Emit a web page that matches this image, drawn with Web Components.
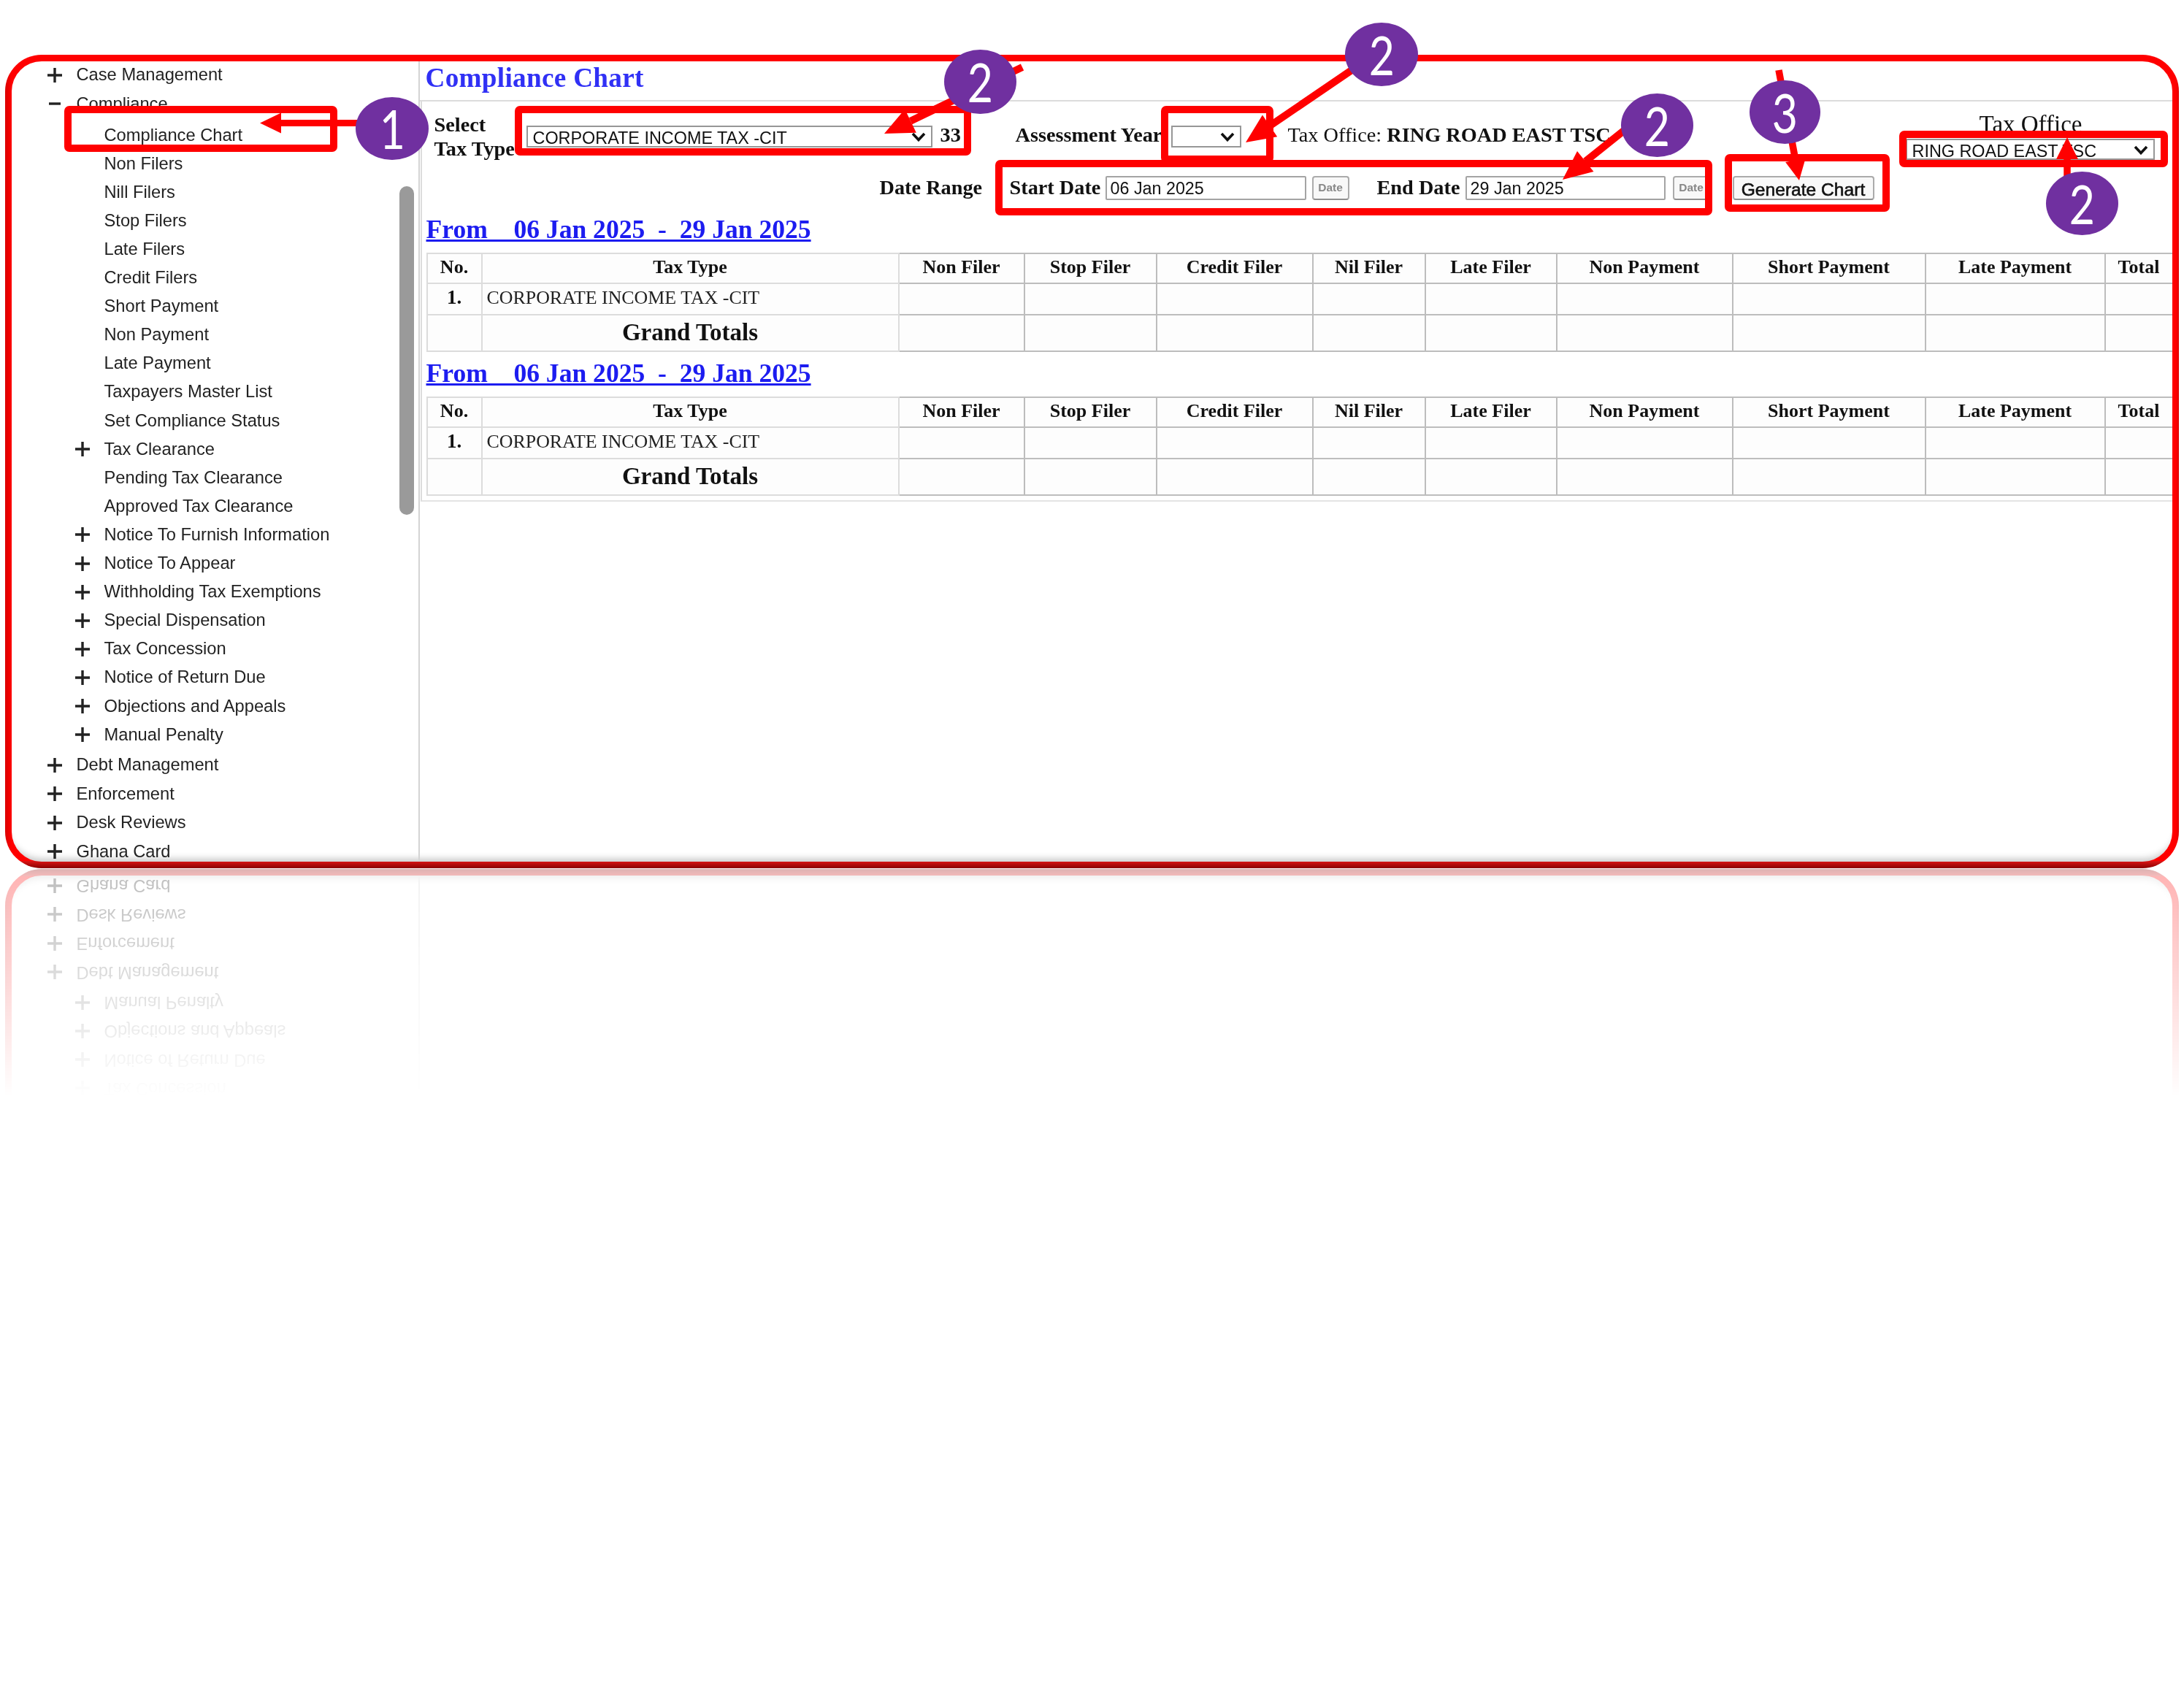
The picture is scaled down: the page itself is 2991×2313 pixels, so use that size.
<!DOCTYPE html>
<html lang="en">
<head>
<meta charset="utf-8">
<title>Compliance Chart</title>
<style>
  html, body { margin: 0; background: white; }
</style>
</head>
<body>
<chart-page>
  <app-frame>
    <side-tree slot="side">
      <tree-item icon="plus" first>Case Management</tree-item>
      <tree-item icon="minus">Compliance</tree-item>
      <tree-item level="1" style="margin-top:3.8px">Compliance Chart</tree-item>
      <tree-item level="1">Non Filers</tree-item>
      <tree-item level="1">Nill Filers</tree-item>
      <tree-item level="1">Stop Filers</tree-item>
      <tree-item level="1">Late Filers</tree-item>
      <tree-item level="1">Credit Filers</tree-item>
      <tree-item level="1">Short Payment</tree-item>
      <tree-item level="1">Non Payment</tree-item>
      <tree-item level="1">Late Payment</tree-item>
      <tree-item level="1">Taxpayers Master List</tree-item>
      <tree-item level="1">Set Compliance Status</tree-item>
      <tree-item level="1" icon="plus">Tax Clearance</tree-item>
      <tree-item level="1">Pending Tax Clearance</tree-item>
      <tree-item level="1">Approved Tax Clearance</tree-item>
      <tree-item level="1" icon="plus">Notice To Furnish Information</tree-item>
      <tree-item level="1" icon="plus">Notice To Appear</tree-item>
      <tree-item level="1" icon="plus">Withholding Tax Exemptions</tree-item>
      <tree-item level="1" icon="plus">Special Dispensation</tree-item>
      <tree-item level="1" icon="plus">Tax Concession</tree-item>
      <tree-item level="1" icon="plus">Notice of Return Due</tree-item>
      <tree-item level="1" icon="plus">Objections and Appeals</tree-item>
      <tree-item level="1" icon="plus">Manual Penalty</tree-item>
      <tree-item icon="plus" style="margin-top:2.5px">Debt Management</tree-item>
      <tree-item icon="plus">Enforcement</tree-item>
      <tree-item icon="plus">Desk Reviews</tree-item>
      <tree-item icon="plus">Ghana Card</tree-item>
    </side-tree>
    <main-panel slot="main" heading="Compliance Chart">
      <chart-form></chart-form>
      <chart-report start="06 Jan 2025" end="29 Jan 2025"></chart-report>
      <chart-report start="06 Jan 2025" end="29 Jan 2025"></chart-report>
    </main-panel>
  </app-frame>
  <mark-layer>
    <num-badge x="487" y="133" w="100" h="86">1</num-badge>
    <num-badge x="1293" y="68" w="99" h="88">2</num-badge>
    <num-badge x="1842" y="31" w="100" h="87">2</num-badge>
    <num-badge x="2220" y="128" w="99" h="87">2</num-badge>
    <num-badge x="2396" y="110" w="97" h="87">3</num-badge>
    <num-badge x="2802" y="235" w="99" h="87">2</num-badge>
  </mark-layer>
</chart-page>

<script>
(function () {
  const serif = `"Liberation Serif", "Times New Roman", serif`
  const sans = `"Liberation Sans", Arial, sans-serif`

  class ChartPage extends HTMLElement {
    constructor () {
      super()
      this.attachShadow({ mode: 'open' }).innerHTML = `
        <style>
          :host {
            display: block;
            position: relative;
            width: 2991px;
            height: 2313px;
            overflow: hidden;
            background: white;
          }
        </style>
        <slot></slot>
      `
    }
  }

  class AppFrame extends HTMLElement {
    constructor () {
      super()
      this.attachShadow({ mode: 'open' }).innerHTML = `
        <style>
          :host {
            display: block;
            box-sizing: border-box;
            width: 2977px;
            height: 1114px;
            margin: 75px 0 0 7px;
            border: 9.5px solid transparent;
            border-radius: 50px;
            background:
              linear-gradient(white, white) padding-box,
              linear-gradient(to right, rgba(120, 0, 0, .28), transparent 9px, transparent calc(100% - 4px), rgba(120, 0, 0, .25)) border-box,
              linear-gradient(to bottom, #ff0000 calc(100% - 10px), #dc1414 calc(100% - 10px), #8a0000 100%) border-box;
            box-shadow: inset 0 -13px 10px -9px rgba(0, 0, 0, .22);
            -webkit-box-reflect: below 1px linear-gradient(to bottom, transparent 72%, rgba(255, 255, 255, .3));
          }
          .inner {
            display: grid;
            grid-template-columns: 559px 1fr;
            height: 100%;
            overflow: hidden;
            border-radius: 40px;
          }
        </style>
        <div class="inner">
          <slot name="side"></slot>
          <slot name="main"></slot>
        </div>
      `
    }
  }

  class SideTree extends HTMLElement {
    constructor () {
      super()
      this.attachShadow({ mode: 'open' }).innerHTML = `
        <style>
          :host {
            display: block;
            position: relative;
            box-sizing: border-box;
            height: 100%;
            overflow: hidden;
            border-right: 2px solid #d4d4d4;
            font: 23.7px ${sans};
            color: #222;
            filter: blur(.45px);
          }
          .thumb {
            position: absolute;
            left: 530.5px;
            top: 171px;
            width: 20px;
            height: 450px;
            border-radius: 10px;
            background: #9a9a9a;
          }
        </style>
        <slot></slot>
        <div class="thumb"></div>
      `
    }
  }

  class TreeItem extends HTMLElement {
    constructor () {
      super()
      let level = Number(this.getAttribute('level') || 0)
      let icon = this.getAttribute('icon')
      let bars = ''
      if (icon === 'plus') bars = '<path d="M0 10H20M10 0V20"/>'
      if (icon === 'minus') bars = '<path d="M2 10H18"/>'
      this.attachShadow({ mode: 'open' }).innerHTML = `
        <style>
          :host {
            display: flex;
            align-items: center;
            gap: 20px;
            height: ${level ? 39.1 : 39.4}px;
            padding-left: ${48.5 + level * 38}px;
            white-space: nowrap;
          }
          :host([first]) { margin-top: -1px; }
          svg { flex: none; width: 20px; height: 20px; }
          path { stroke: #222; stroke-width: 3.4; fill: none; }
        </style>
        <svg viewBox="0 0 20 20">${bars}</svg>
        <span><slot></slot></span>
      `
    }
  }

  class MainPanel extends HTMLElement {
    constructor () {
      super()
      this.attachShadow({ mode: 'open' }).innerHTML = `
        <style>
          :host { display: block; filter: blur(.45px); }
          header {
            box-sizing: border-box;
            height: 54.5px;
            padding: 0 0 7px 7.5px;
            border-bottom: 2px solid #dcdcdc;
            font: bold 37.2px/45px ${serif};
            letter-spacing: .3px;
            color: #3030f5;
          }
          .panel {
            box-sizing: border-box;
            height: 548px;
            margin-left: 1px;
            border-left: 2px solid #dcdcdc;
            border-bottom: 2px solid #e4e4e4;
          }
        </style>
        <header>${this.getAttribute('heading')}</header>
        <div class="panel"><slot></slot></div>
      `
    }
  }

  class PickBox extends HTMLElement {
    constructor () {
      super()
      this.attachShadow({ mode: 'open' }).innerHTML = `
        <style>
          :host {
            display: block;
            position: relative;
            flex: none;
            box-sizing: border-box;
          }
          select {
            display: block;
            box-sizing: border-box;
            width: 100%;
            height: 100%;
            margin: 0;
            padding: 2px 30px 0 7px;
            appearance: none;
            border: 2px solid #979797;
            border-radius: 0;
            background: white;
            font: 23.4px ${sans};
            color: #111;
          }
          svg {
            position: absolute;
            right: 9px;
            top: 9px;
            width: 20px;
            height: 13px;
          }
        </style>
        <select><option>${this.getAttribute('value') || ''}</option></select>
        <svg viewBox="0 0 20 13"><path d="M2 2L10 10.5L18 2" fill="none" stroke="#111" stroke-width="3.6"/></svg>
      `
    }
  }

  let formTemplate = document.createElement('template')
  formTemplate.innerHTML = `
    <style>
      :host {
        display: block;
        padding-bottom: 6px;
        font: bold 28.3px ${serif};
        color: #111;
      }
      .row { display: flex; align-items: center; white-space: nowrap; }
      .top { height: 97px; }
      .dates { height: 43px; }
      .up { margin-bottom: 4px; }
      .stack-label { font: bold 28.3px/33px ${serif}; }
      .normal { font-weight: normal; }
      .office {
        flex: none;
        width: 341px;
        margin: 0 0 1px 404px;
        text-align: center;
      }
      .office div { font: 33px/30px ${serif}; margin: 0 0 5px 2px; }
      pick-box.tall { height: 30px; }
      input {
        box-sizing: border-box;
        height: 33px;
        margin: 0;
        padding: 3px 5px 0;
        border: 2px solid #a4a4a4;
        border-radius: 2px;
        font: 23.3px ${sans};
        color: #111;
        background: white;
      }
      button {
        box-sizing: border-box;
        height: 33px;
        margin: 0;
        padding: 0;
        border: 2px solid #ababab;
        border-bottom-color: #8f8f8f;
        border-radius: 4px;
        background: #f8f8f8;
      }
      .pick { width: 51px; margin-left: 8px; font: bold 15.5px ${sans}; color: #888; }
      .go {
        width: 194px;
        margin-left: 31px;
        padding-top: 3px;
        font: 24.6px ${sans};
        -webkit-text-stroke: .6px #111;
        color: #111;
      }
    </style>
    <div class="row top">
      <div class="stack-label" style="margin-left:16.5px;width:126px;flex:none">Select<br>Tax Type</div>
      <pick-box class="tall" style="width:556px" value="CORPORATE INCOME TAX -CIT"></pick-box>
      <span class="up" style="margin-left:11px;width:28px;flex:none">33</span>
      <span class="up" style="margin-left:75px;width:213px;flex:none">Assessment Year</span>
      <pick-box class="tall" style="width:96px"></pick-box>
      <span class="up" style="margin-left:64px;width:442px;flex:none"><span class="normal">Tax Office:</span> RING ROAD EAST TSC</span>
      <div class="office">
        <div>Tax Office</div>
        <pick-box class="tall" style="height:29px" value="RING ROAD EAST TSC"></pick-box>
      </div>
    </div>
    <div class="row dates">
      <span style="margin-left:626.5px;width:141px;flex:none">Date Range</span>
      <span style="margin-left:37px;width:125px;flex:none">Start Date</span>
      <input style="margin-left:6px;width:275px" value="06 Jan 2025">
      <button class="pick">Date</button>
      <span style="margin-left:38px;width:114px;flex:none">End Date</span>
      <input style="margin-left:7px;width:274px" value="29 Jan 2025">
      <button class="pick" style="margin-left:10px">Date</button>
      <button class="go">Generate Chart</button>
    </div>
  `

  class ChartForm extends HTMLElement {
    constructor () {
      super()
      this.attachShadow({ mode: 'open' })
        .appendChild(formTemplate.content.cloneNode(true))
    }
  }

  const columns = [75, 571, 172, 181, 214, 154, 180, 241, 264, 246, 93]
  const measures = ['Non Filer', 'Stop Filer', 'Credit Filer', 'Nil Filer', 'Late Filer', 'Non Payment', 'Short Payment', 'Late Payment', 'Total']

  class ChartReport extends HTMLElement {
    constructor () {
      super()
      let range = `From&nbsp;&nbsp;&nbsp;&nbsp;${this.getAttribute('start')}&nbsp;&nbsp;-&nbsp;&nbsp;${this.getAttribute('end')}`
      let empties = measures.map(() => '<td></td>').join('')
      this.attachShadow({ mode: 'open' }).innerHTML = `
        <style>
          :host {
            display: block;
            margin: 9px 0 0 5.5px;
            color: #111;
          }
          a {
            display: block;
            height: 40px;
            margin-bottom: 12px;
            font: bold 35.6px/40px ${serif};
            color: #1c1cf0;
            text-decoration: underline;
            white-space: nowrap;
          }
          table {
            table-layout: fixed;
            border-collapse: collapse;
            width: 2391px;
            background: #fdfdfd;
          }
          td, th {
            box-sizing: border-box;
            padding: 0 0 3px;
            border: 2px solid #bdbdbd;
            text-align: center;
          }
          .soft { border-color: #dcdcdc; }
          th { font: bold 26px ${serif}; height: 41px; }
          td { height: 43px; }
          .totals td { height: 50px; padding-bottom: 1px; }
          .name { padding-left: 6px; text-align: left; font: 25.9px ${serif}; color: #222; }
          .no { font: bold 27px ${serif}; }
          .sum { font: bold 33px ${serif}; }
        </style>
        <a href="#">${range}</a>
        <table>
          <colgroup>${columns.map(w => `<col style="width:${w}px">`).join('')}</colgroup>
          <thead>
            <tr>
              <th class="soft">No.</th>
              <th class="soft">Tax Type</th>
              ${measures.map(m => `<th>${m}</th>`).join('')}
            </tr>
          </thead>
          <tbody>
            <tr>
              <td class="soft no">1.</td>
              <td class="soft name">CORPORATE INCOME TAX -CIT</td>
              ${empties}
            </tr>
            <tr class="totals">
              <td class="soft"></td>
              <td class="soft sum">Grand Totals</td>
              ${empties}
            </tr>
          </tbody>
        </table>
      `
    }
  }

  // red call-out boxes and arrows sit on top of the screenshot
  const boxes = [
    [93, 150, 364, 53],
    [710, 150, 615, 58],
    [1595, 150, 144, 68],
    [1368, 224, 972, 66],
    [2367, 216, 216, 69],
    [2606, 184, 358, 40]
  ]

  function arrow (x1, y1, x2, y2, headLen, headHalf, shaft) {
    let len = Math.hypot(x2 - x1, y2 - y1)
    let ux = (x2 - x1) / len
    let uy = (y2 - y1) / len
    let bx = x2 - ux * headLen
    let by = y2 - uy * headLen
    return `
      <line x1="${x1}" y1="${y1}" x2="${bx}" y2="${by}" stroke="#f00" stroke-width="${shaft}"/>
      <polygon fill="#f00" points="${x2},${y2} ${bx - uy * headHalf},${by + ux * headHalf} ${bx + uy * headHalf},${by - ux * headHalf}"/>
    `
  }

  class MarkLayer extends HTMLElement {
    constructor () {
      super()
      let rects = boxes.map(([x, y, w, h]) =>
        `<rect x="${x}" y="${y}" width="${w}" height="${h}" rx="2" fill="none" stroke="#f00" stroke-width="10"/>`).join('')
      this.attachShadow({ mode: 'open' }).innerHTML = `
        <style>
          :host {
            display: block;
            position: absolute;
            left: 0;
            top: 0;
            width: 2991px;
            height: 1300px;
            pointer-events: none;
          }
          svg { position: absolute; left: 0; top: 0; }
        </style>
        <svg width="2991" height="1300">
          ${rects}
          ${arrow(500, 168.5, 356, 168.5, 29, 14, 9)}
          ${arrow(1400, 92, 1211, 183, 40, 18, 10)}
          ${arrow(1860, 90, 1706, 195, 40, 18, 10)}
          ${arrow(2235, 170, 2140, 246, 40, 18, 10)}
          ${arrow(2436, 96, 2464, 247, 28, 14, 9.5)}
          ${arrow(2831, 250, 2831, 188, 30, 15, 9.5)}
        </svg>
        <slot></slot>
      `
    }
  }

  class NumBadge extends HTMLElement {
    constructor () {
      super()
      let [x, y, w, h] = ['x', 'y', 'w', 'h'].map(k => this.getAttribute(k))
      this.attachShadow({ mode: 'open' }).innerHTML = `
        <style>
          :host {
            display: flex;
            align-items: center;
            justify-content: center;
            position: absolute;
            left: ${x}px;
            top: ${y}px;
            width: ${w}px;
            height: ${h}px;
            border-radius: 50%;
            background: #7030a0;
            color: white;
            font: 74px/1 Lato, "Open Sans", sans-serif;
          }
          span { display: block; transform: scaleX(.82); }
        </style>
        <span><slot></slot></span>
      `
    }
  }

  window.customElements.define('chart-page', ChartPage)
  window.customElements.define('app-frame', AppFrame)
  window.customElements.define('side-tree', SideTree)
  window.customElements.define('tree-item', TreeItem)
  window.customElements.define('main-panel', MainPanel)
  window.customElements.define('pick-box', PickBox)
  window.customElements.define('chart-form', ChartForm)
  window.customElements.define('chart-report', ChartReport)
  window.customElements.define('mark-layer', MarkLayer)
  window.customElements.define('num-badge', NumBadge)
})()
</script>
</body>
</html>
